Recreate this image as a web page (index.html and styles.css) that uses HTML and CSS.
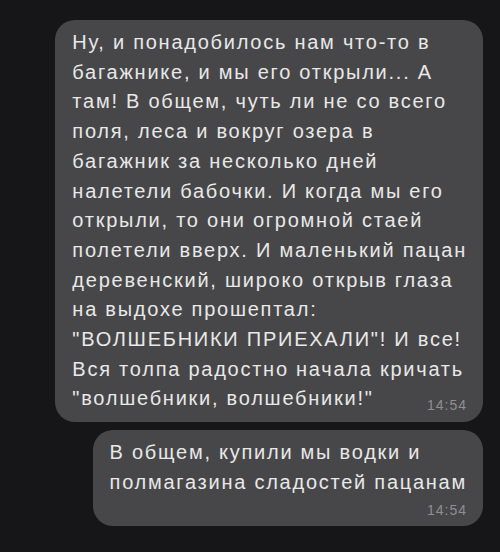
FILE: index.html
```html
<!DOCTYPE html>
<html lang="ru">
<head>
  <meta charset="UTF-8" />
  <meta name="viewport" content="width=device-width, initial-scale=1" />
  <title>Чат</title>
  <link rel="stylesheet" href="styles.css">
</head>
<body>
  <!-- Message list, outgoing bubbles on the right -->
  <main class="chat">
    <div class="bubble">
      <p class="text">Ну, и понадобилось нам что-то в<br>
        багажнике, и мы его открыли... А<br>
        там! В общем, чуть ли не со всего<br>
        поля, леса и вокруг озера в<br>
        багажник за несколько дней<br>
        налетели бабочки. И когда мы его<br>
        открыли, то они огромной стаей<br>
        полетели вверх. И маленький пацан<br>
        деревенский, широко открыв глаза<br>
        на выдохе прошептал:<br>
        "ВОЛШЕБНИКИ ПРИЕХАЛИ"! И все!<br>
        Вся толпа радостно начала кричать<br>
        "волшебники, волшебники!"<span class="time inline">14:54</span></p>
    </div>

    <div class="bubble">
      <p class="text">В общем, купили мы водки и<br>
        полмагазина сладостей пацанам</p>
      <span class="time">14:54</span>
    </div>
  </main>
</body>
</html>
```

FILE: styles.css
```css
/* Reset and base styles */
* {
  margin: 0;
  padding: 0;
  box-sizing: border-box;
}

body, html {
  height: 100%;
  background-color: #161618;
  color: #e8e8e8;
  font-family: 'Liberation Sans', Arial, sans-serif;
  overflow: hidden;
}

.chat {
  display: flex;
  flex-direction: column;
  align-items: flex-end;
  gap: 8px;
  padding: 20px 17px;
}

.bubble {
  background: #474749;
  border-radius: 20px;
  padding: 8px 16px 8px 17px;
}

.text {
  font-size: 20px;
  line-height: 29.7px;
  letter-spacing: 1.75px;
  white-space: nowrap;
}

.time {
  display: block;
  margin-top: 4px;
  font-size: 14px;
  line-height: 16px;
  letter-spacing: 1px;
  color: #8e8e92;
  text-align: right;
}

/* time sits at the end of the last line */
.time.inline {
  display: inline-block;
  float: right;
  margin-top: 14px;
  line-height: 15px;
}
```
